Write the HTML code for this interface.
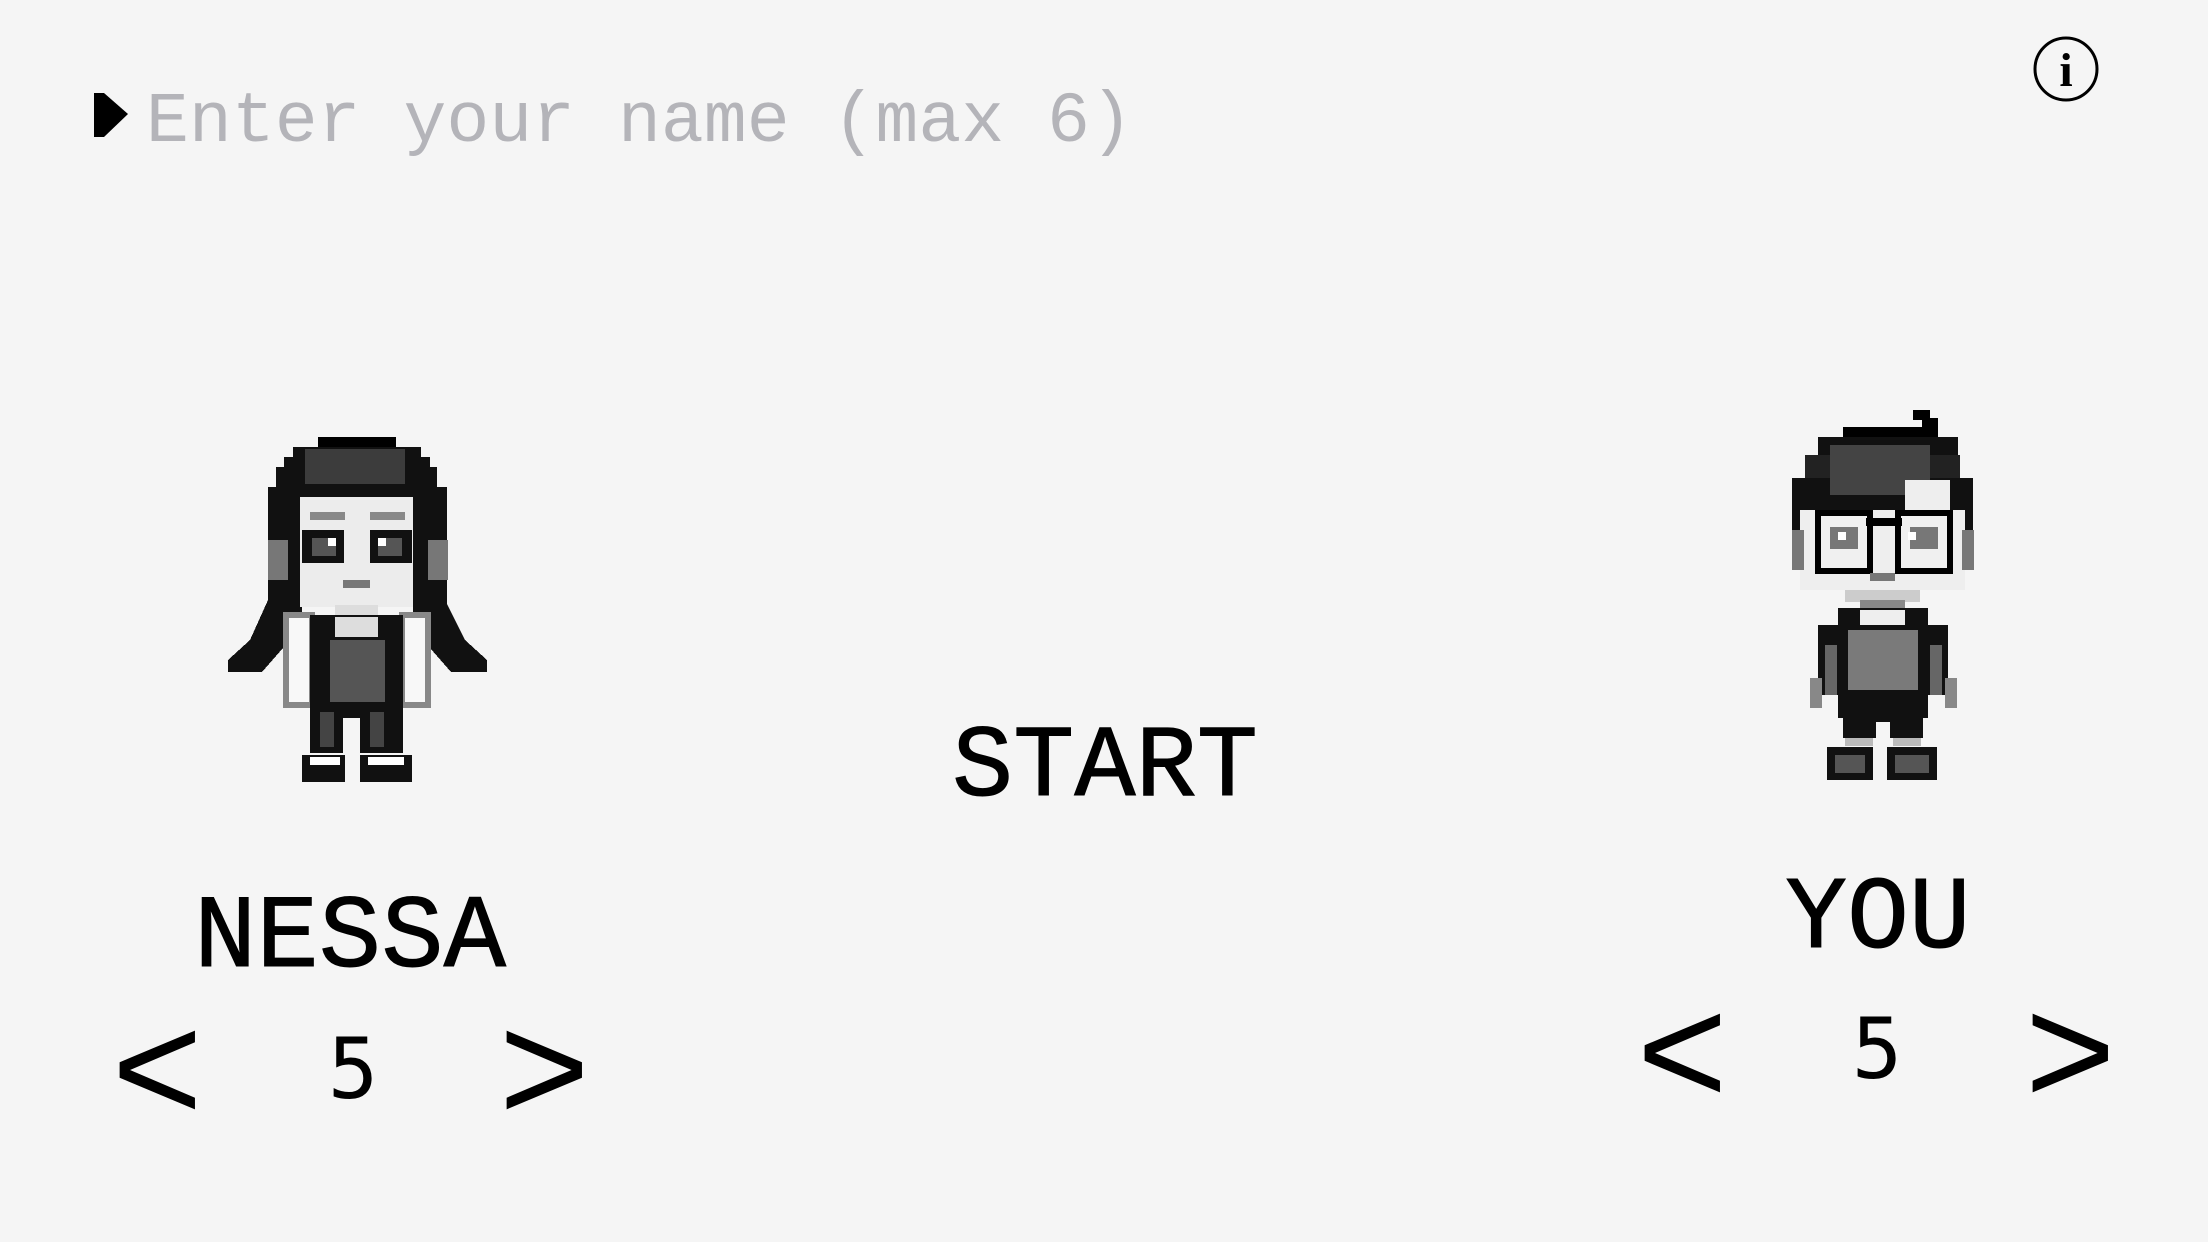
<!DOCTYPE html>
<html><head><meta charset="utf-8"><style>
html,body{margin:0;padding:0;background:#f5f5f5;}
svg{display:block}
</style></head><body>
<svg width="2208" height="1242" viewBox="0 0 2208 1242" xmlns="http://www.w3.org/2000/svg">
<rect width="2208" height="1242" fill="#f5f5f5"/>
<polygon points="94,93 104,93 128,114 104,137 94,137" fill="#000"/>
<text x="146" y="141" font-family="Liberation Mono, 'Courier New', monospace" font-size="71.5" fill="#b4b4b9">Enter your name (max 6)</text>
<circle cx="2066" cy="69" r="31" fill="none" stroke="#000" stroke-width="3"/>
<text x="2066" y="86" text-anchor="middle" font-family="Liberation Serif, serif" font-size="48" font-weight="bold" fill="#000">i</text>

<g shape-rendering="crispEdges">
<rect x="318" y="437" width="78" height="10" fill="#000"/>
<rect x="293" y="447" width="128" height="12" fill="#111"/>
<rect x="284" y="457" width="146" height="12" fill="#111"/>
<rect x="276" y="467" width="161" height="30" fill="#111"/>
<rect x="305" y="449" width="100" height="35" fill="#3c3c3c"/>
<rect x="268" y="487" width="34" height="125" fill="#111"/>
<rect x="413" y="487" width="34" height="125" fill="#111"/>
<rect x="300" y="497" width="113" height="110" fill="#ececec"/>
<rect x="268" y="540" width="20" height="40" fill="#777"/>
<rect x="428" y="540" width="20" height="40" fill="#777"/>
<rect x="310" y="512" width="35" height="8" fill="#888"/>
<rect x="370" y="512" width="35" height="8" fill="#888"/>
<rect x="302" y="530" width="42" height="33" fill="#111"/>
<rect x="370" y="530" width="42" height="33" fill="#111"/>
<rect x="312" y="538" width="24" height="18" fill="#555"/>
<rect x="378" y="538" width="24" height="18" fill="#555"/>
<rect x="328" y="538" width="8" height="8" fill="#fff"/>
<rect x="378" y="538" width="8" height="8" fill="#fff"/>
<rect x="343" y="580" width="27" height="8" fill="#777"/>
<rect x="335" y="605" width="43" height="28" fill="#ddd"/>
<polygon points="268,600 300,600 290,640 262,672 228,672 228,660 250,640" fill="#111"/>
<polygon points="445,600 413,600 423,640 451,672 487,672 487,660 465,640" fill="#111"/>
<rect x="286" y="615" width="26" height="90" fill="#f8f8f8" stroke="#888" stroke-width="6"/>
<rect x="402" y="615" width="26" height="90" fill="#f8f8f8" stroke="#888" stroke-width="6"/>
<rect x="310" y="615" width="93" height="95" fill="#111"/>
<rect x="330" y="640" width="55" height="62" fill="#555"/>
<rect x="335" y="617" width="43" height="20" fill="#ddd"/>
<rect x="310" y="708" width="93" height="45" fill="#111"/>
<rect x="343" y="718" width="17" height="35" fill="#f5f5f5"/>
<rect x="320" y="712" width="14" height="35" fill="#444"/>
<rect x="370" y="712" width="14" height="35" fill="#444"/>
<rect x="302" y="755" width="43" height="27" fill="#111"/>
<rect x="360" y="755" width="52" height="27" fill="#111"/>
<rect x="310" y="757" width="30" height="8" fill="#fff"/>
<rect x="368" y="757" width="36" height="8" fill="#fff"/>
</g>

<g shape-rendering="crispEdges">
<rect x="1913" y="410" width="17" height="10" fill="#000"/>
<rect x="1922" y="418" width="16" height="15" fill="#000"/>
<rect x="1843" y="427" width="95" height="12" fill="#000"/>
<rect x="1818" y="437" width="140" height="20" fill="#111"/>
<rect x="1805" y="455" width="155" height="25" fill="#222"/>
<rect x="1792" y="478" width="181" height="52" fill="#111"/>
<rect x="1830" y="445" width="100" height="50" fill="#444"/>
<rect x="1905" y="480" width="45" height="30" fill="#eee"/>
<rect x="1800" y="510" width="165" height="80" fill="#eee"/>
<rect x="1792" y="530" width="12" height="40" fill="#777"/>
<rect x="1962" y="530" width="12" height="40" fill="#777"/>
<rect x="1818" y="513" width="52" height="58" fill="#f0f0f0" stroke="#000" stroke-width="6"/>
<rect x="1898" y="513" width="52" height="58" fill="#f0f0f0" stroke="#000" stroke-width="6"/>
<rect x="1866" y="518" width="36" height="8" fill="#000"/>
<rect x="1830" y="527" width="28" height="22" fill="#777"/>
<rect x="1910" y="527" width="28" height="22" fill="#777"/>
<rect x="1838" y="532" width="8" height="8" fill="#fff"/>
<rect x="1908" y="532" width="8" height="8" fill="#fff"/>
<rect x="1870" y="573" width="25" height="8" fill="#777"/>
<rect x="1845" y="590" width="75" height="12" fill="#ccc"/>
<rect x="1860" y="600" width="45" height="10" fill="#888"/>
<rect x="1838" y="608" width="90" height="110" fill="#111"/>
<rect x="1818" y="625" width="130" height="70" fill="#111"/>
<rect x="1848" y="630" width="70" height="60" fill="#7a7a7a"/>
<rect x="1825" y="645" width="12" height="50" fill="#666"/>
<rect x="1930" y="645" width="12" height="50" fill="#666"/>
<rect x="1810" y="678" width="12" height="30" fill="#888"/>
<rect x="1945" y="678" width="12" height="30" fill="#888"/>
<rect x="1860" y="610" width="45" height="15" fill="#eee"/>
<rect x="1843" y="712" width="80" height="26" fill="#111"/>
<rect x="1876" y="722" width="14" height="16" fill="#f5f5f5"/>
<rect x="1845" y="738" width="28" height="8" fill="#bbb"/>
<rect x="1893" y="738" width="28" height="8" fill="#bbb"/>
<rect x="1827" y="747" width="46" height="33" fill="#111"/>
<rect x="1887" y="747" width="50" height="33" fill="#111"/>
<rect x="1835" y="755" width="30" height="18" fill="#555"/>
<rect x="1895" y="755" width="34" height="18" fill="#555"/>
</g>

<text x="1105" y="795" text-anchor="middle" font-family="Liberation Mono, 'Courier New', monospace" font-size="102" fill="#000" stroke="#000" stroke-width="1">START</text>
<text x="350" y="966" text-anchor="middle" font-family="Liberation Mono, 'Courier New', monospace" font-size="104" fill="#000" stroke="#000" stroke-width="1">NESSA</text>
<text x="1878" y="947" text-anchor="middle" font-family="Liberation Mono, 'Courier New', monospace" font-size="103" fill="#000" stroke="#000" stroke-width="1">YOU</text>

<text x="112" y="1121" font-family="Liberation Sans, sans-serif" font-size="155" fill="#000">&lt;</text>
<text x="353" y="1098" text-anchor="middle" font-family="DejaVu Sans Mono, monospace" font-size="84" fill="#000">5</text>
<text x="499" y="1121" font-family="Liberation Sans, sans-serif" font-size="155" fill="#000">&gt;</text>

<text x="1637" y="1104" font-family="Liberation Sans, sans-serif" font-size="155" fill="#000">&lt;</text>
<text x="1877" y="1078" text-anchor="middle" font-family="DejaVu Sans Mono, monospace" font-size="84" fill="#000">5</text>
<text x="2025" y="1104" font-family="Liberation Sans, sans-serif" font-size="155" fill="#000">&gt;</text>
</svg>
</body></html>
